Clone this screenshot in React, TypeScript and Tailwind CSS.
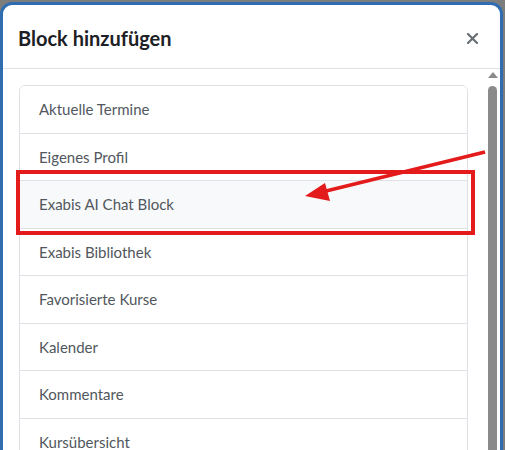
const blocks = [
  'Aktuelle Termine',
  'Eigenes Profil',
  'Exabis AI Chat Block',
  'Exabis Bibliothek',
  'Favorisierte Kurse',
  'Kalender',
  'Kommentare',
  'Kursübersicht',
  'Lernpläne',
]

export default function App() {
  return (
    <div className="relative w-[505px] h-[450px] overflow-hidden bg-[#7d7d7d] pt-[2px] pr-[2px] font-['Lato',sans-serif]">
      {/* Modal */}
      <div className="h-[460px] bg-white border-[3px] border-[#2f6db0] rounded-t-[12px] flex flex-col">
        {/* Header */}
        <div className="h-[64px] shrink-0 flex items-center justify-between pl-[15px] pr-[22px] border-b border-[#dee2e6]">
          <h2 className="text-[20px] font-bold text-[#1d2125] mt-[2px]">Block hinzufügen</h2>
          <svg width="11" height="11" viewBox="0 0 11 11" className="mt-[4px]">
            <path d="M1 1 L10 10 M10 1 L1 10" stroke="#6a6f74" strokeWidth="2.2" strokeLinecap="round" />
          </svg>
        </div>

        {/* Body */}
        <div className="flex-1 flex overflow-hidden">
          <div className="flex-1 pl-[16px] pr-[20px] pt-[16px]">
            <div className="border border-[#dee2e6] rounded-[6px] overflow-hidden">
              {blocks.map((b, i) => (
                <div
                  key={b}
                  className={`pl-[19px] pr-5 py-3 text-[15px] leading-[1.5] text-[#51575d] ${i > 0 ? 'border-t border-[#dee2e6]' : ''} ${i === 2 ? 'bg-[#f8f9fa]' : 'bg-white'}`}
                >
                  {b}
                </div>
              ))}
            </div>
          </div>

          {/* Scrollbar */}
          <div className="w-[9px] mr-[3px] shrink-0 flex flex-col items-center pt-[3px]">
            <div className="w-0 h-0 border-l-[5px] border-r-[5px] border-b-[6px] border-l-transparent border-r-transparent border-b-[#8a8a8a]" />
            <div className="mt-[8px] w-[9px] flex-1 bg-[#8a8a8a] rounded-t-full" />
          </div>
        </div>
      </div>

      {/* Annotation: red box */}
      <div className="absolute left-[16px] top-[170px] w-[459px] h-[65px] border-[4px] border-[#e31b1b]" />

      {/* Annotation: arrow */}
      <svg className="absolute left-0 top-0" width="505" height="450" viewBox="0 0 505 450">
        <line x1="485" y1="152" x2="322" y2="192" stroke="#e31b1b" strokeWidth="3.5" />
        <polygon points="305,196 325,183 330,201" fill="#e31b1b" />
      </svg>
    </div>
  )
}
